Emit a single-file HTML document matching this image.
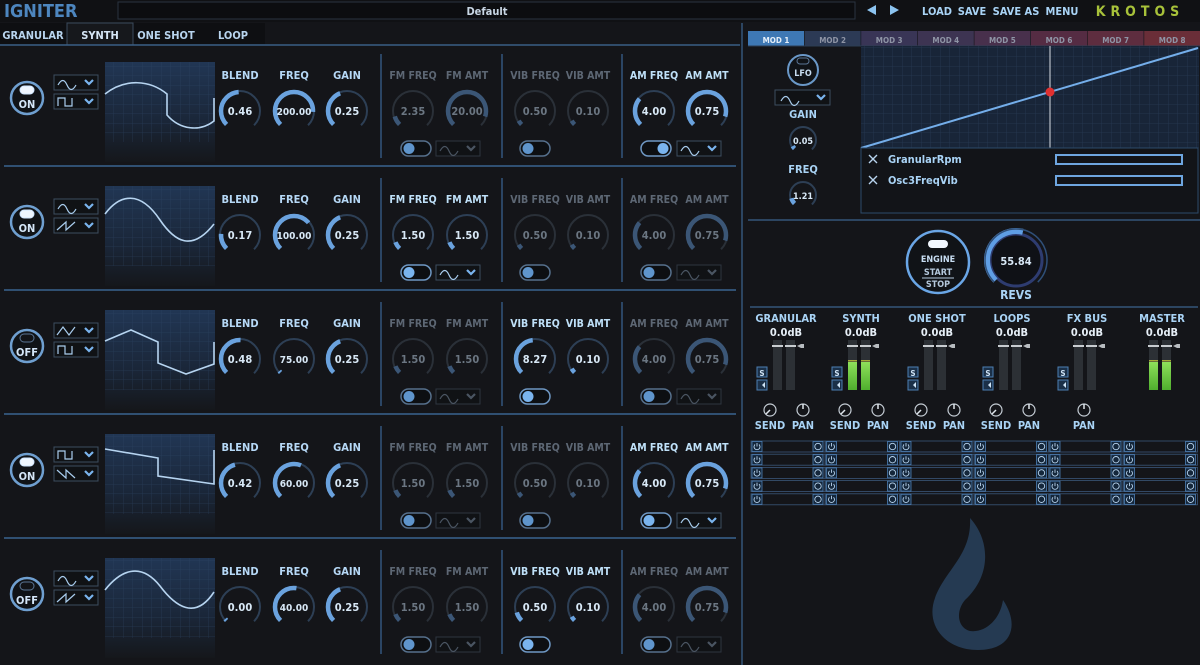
<!DOCTYPE html>
<html><head><meta charset="utf-8"><style>
html,body{margin:0;padding:0;background:#141519;width:1200px;height:665px;overflow:hidden}
svg{display:block}
text{font-family:"DejaVu Sans Condensed","Liberation Sans",sans-serif;font-weight:bold}
</style></head><body>
<svg id="s" width="1200" height="665" xmlns="http://www.w3.org/2000/svg">
<defs>
<pattern id="grid" width="9.5" height="9.5" patternUnits="userSpaceOnUse"><path d="M9.5 0V9.5H0" fill="none" stroke="#2f4766" stroke-width="0.8"/></pattern>
<linearGradient id="fade" x1="0" y1="0" x2="0" y2="1"><stop offset="0" stop-color="#213654"/><stop offset="0.6" stop-color="#1a2638"/><stop offset="1" stop-color="#15171b"/></linearGradient>
<linearGradient id="green" x1="0" y1="0" x2="0" y2="1"><stop offset="0" stop-color="#8ee05a"/><stop offset="1" stop-color="#4fae2e"/></linearGradient>
</defs>
</svg>
<script>
const S=document.getElementById('s');let h='';
const BL='#7fb4ea',DIM='#5d6774',LB='#a9d3f5';
function T(x,y,t,sz,c,anc){h+=`<text x="${x}" y="${y}" font-size="${sz}" fill="${c}" text-anchor="${anc||'middle'}">${t}</text>`}
h+=`<rect x="0" y="0" width="1200" height="22" fill="#101114"/>`;
T(4,17,'IGNITER',18,'#4d86bf','start');
h+=`<rect x="118" y="2" width="737" height="17" fill="#0c0d10" stroke="#2a3340"/>`;
T(487,15,'Default',11,'#c8d6e4');
h+=`<path d="M867 10l9-5v10z M890 5l9 5-9 5z" fill="#8cc4f0"/>`;
T(937,15,'LOAD',11,LB);T(972,15,'SAVE',11,LB);T(1016,15,'SAVE AS',11,LB);T(1062,15,'MENU',11,LB);
h+=`<text x="1140" y="16" font-size="14" fill="#a8c23a" text-anchor="middle" letter-spacing="5">KROTOS</text>`;
h+=`<rect x="0" y="23" width="265" height="21" fill="#0e0f12"/><rect x="67" y="23" width="66" height="22" fill="#16181c" stroke="#3a4a5c"/>`;
T(33,39,'GRANULAR',11,'#b8d4ee');T(100,39,'SYNTH',11,'#d6e6f6');T(166,39,'ONE SHOT',11,'#b8d4ee');T(233,39,'LOOP',11,'#b8d4ee');
h+=`<line x1="0" y1="45" x2="740" y2="45" stroke="#3a5f86" stroke-width="1.5"/>`;
h+=`<line x1="742" y1="23" x2="742" y2="665" stroke="#2c4561" stroke-width="2"/>`;
function knob(cx,cy,r,f,val,act,fs){
 const C=2*Math.PI*r;const tc=act?'#2d3f55':'#2a3038',vc=act?'#6aa2de':'#3b5676';
 h+=`<circle cx="${cx}" cy="${cy}" r="${r}" fill="none" stroke="${tc}" stroke-width="2" stroke-dasharray="${0.75*C} ${C}" transform="rotate(135 ${cx} ${cy})"/>`;
 if(f>0.005)h+=`<circle cx="${cx}" cy="${cy}" r="${r-1}" fill="none" stroke="${vc}" stroke-width="4.5" stroke-dasharray="${0.75*C*f} ${C*2}" transform="rotate(135 ${cx} ${cy})"/>`;
 else h+=`<circle cx="${cx}" cy="${cy}" r="${r-1}" fill="none" stroke="${vc}" stroke-width="4.5" stroke-dasharray="2 ${C*2}" transform="rotate(135 ${cx} ${cy})"/>`;
 T(cx,cy+4,val,fs||11,act?'#d8e8f6':'#6b7682');
}
function tog(x,y,act,right){h+=`<rect x="${x}" y="${y}" width="30" height="15" rx="7.5" fill="#0d0f12" stroke="${act?'#6f98c4':'#56708c'}" stroke-width="1.5"/><circle cx="${right?x+22:x+8}" cy="${y+7.5}" r="5.5" fill="${act?'#7ab4ee':'#5f95cc'}"/>`}
function dd(x,y,w,act,sh){const c=act?'#a9cdee':'#4a5562';h+=`<rect x="${x}" y="${y}" width="${w}" height="15" fill="#101215" stroke="${act?'#3d4d60':'#2e3540'}"/>`;
 const p=sh||'M'+(x+4)+' '+(y+10)+'q5-9 9 0t9 0';h+=`<path d="${p}" fill="none" stroke="${c}" stroke-width="1.2"/>`;
 h+=`<path d="M${x+w-13} ${y+5}l4 4 4-4" fill="none" stroke="${act?'#7ab4ee':'#4a5562'}" stroke-width="2.2"/>`}
const rows=[
 {on:1,sh1:'sine',sh2:'sq',f:[.46,.8,.4, .1,.85, .05,.05, .3,.85],v:['0.46','200.00','0.25','2.35','20.00','0.50','0.10','4.00','0.75'],a:2,wave:'M105 94 C125 78 150 80 167 94 L167 115 C180 130 200 132 214 121 L214 98'},
 {on:1,sh1:'sine',sh2:'saw',f:[.17,.65,.4, .08,.08, .05,.05, .3,.85],v:['0.17','100.00','0.25','1.50','1.50','0.50','0.10','4.00','0.75'],a:0,wave:'M105 90 C120 70 140 66 160 96 C175 118 192 128 214 100'},
 {on:0,sh1:'tri',sh2:'sq',f:[.48,.02,.4, .08,.08, .45,.05, .3,.85],v:['0.48','75.00','0.25','1.50','1.50','8.27','0.10','4.00','0.75'],a:1,wave:'M105 93 L131 82 L158 94 L158 115 L186 126 L214 116 L214 94'},
 {on:1,sh1:'sq',sh2:'sawd',f:[.42,.55,.4, .08,.08, .05,.05, .3,.85],v:['0.42','60.00','0.25','1.50','1.50','0.50','0.10','4.00','0.75'],a:2,wave:'M105 77 L158 86 L158 104 L214 112 L214 78'},
 {on:0,sh1:'sine',sh2:'saw',f:[0,.5,.4, .08,.08, .1,.05, .3,.85],v:['0.00','40.00','0.25','1.50','1.50','0.50','0.10','4.00','0.75'],a:1,wave:'M105 94 C120 75 140 65 160 90 C175 110 195 125 214 96'}];
const kx=[240,294,347,413,467,535,588,654,707];
const lbl=['BLEND','FREQ','GAIN','FM FREQ','FM AMT','VIB FREQ','VIB AMT','AM FREQ','AM AMT'];
function shapePath(k,x,y){
 if(k=='sine')return `M${x+4} ${y+10}q5-9 9 0t9 0`;
 if(k=='sq')return `M${x+4} ${y+12}v-8h7v8h7v-8`;
 if(k=='tri')return `M${x+3} ${y+12}l6-8 6 8 6-8`;
 if(k=='saw')return `M${x+3} ${y+12}l9-8v8l9-8`;
 if(k=='sawd')return `M${x+3} ${y+4}l9 8v-8l9 8`;}
rows.forEach((r,i)=>{const t=42+124*i;
 if(i<4)h+=`<line x1="4" y1="${t+124}" x2="736" y2="${t+124}" stroke="#3a6590" stroke-width="1.5"/>`;
 h+=`<circle cx="27" cy="${t+56}" r="16" fill="#101317" stroke="#6f9fd0" stroke-width="2.5"/>`;
 h+=`<rect x="20" y="${t+44}" width="14" height="8" rx="4" fill="${r.on?'#eef6ff':'#121418'}" stroke="${r.on?'#cfe6ff':'#5a7594'}"/>`;
 T(27,t+66,r.on?'ON':'OFF',11,'#d4e6f8');
 dd(54,t+33,44,1,shapePath(r.sh1,54,t+33));dd(54,t+52,44,1,shapePath(r.sh2,54,t+52));
 h+=`<rect x="105" y="${t+20}" width="110" height="100" fill="url(#fade)"/><rect x="105" y="${t+20}" width="110" height="80" fill="url(#grid)" opacity="0.6"/>`;
 h+=`<path d="${r.wave}" transform="translate(0 ${t-42})" fill="none" stroke="#b6d4f0" stroke-width="1.6"/>`;
 [381,502,622].forEach(x=>h+=`<line x1="${x}" y1="${t+12}" x2="${x}" y2="${t+116}" stroke="#2b4564" stroke-width="2"/>`);
 kx.forEach((x,j)=>{const grp=j<3?-1:Math.floor((j-3)/2);const act=grp==-1||grp==r.a;
  T(x,t+37,lbl[j],j<3?11:10.5,act?(grp==-1?'#b6d8f6':'#bfe0f8'):DIM);
  knob(x,t+69,20,r.f[j],r.v[j],act,j==1?10:11);});
 tog(401,t+99,r.a==0,false);dd(436,t+99,44,r.a==0);
 tog(520,t+99,r.a==1,false);
 tog(641,t+99,r.a==2,r.a==2&&i==0);dd(677,t+99,44,r.a==2);
});
const tc=['#3e78b4','#2c3a55','#393556','#3d3452','#48304c','#552c43','#5e2d3f','#6a2e38'];
for(let k=0;k<8;k++){const x=748+k*56.6;h+=`<rect x="${x}" y="31" width="56" height="15" fill="${tc[k]}"/>`;T(x+28,43,'MOD '+(k+1),8,k?'#8f95a6':'#e6f0fa');}
h+=`<line x1="748" y1="46" x2="1200" y2="46" stroke="#2c3d52"/>`;
h+=`<rect x="861" y="46" width="338" height="102" fill="#182538"/><rect x="861" y="46" width="338" height="102" fill="url(#grid)" opacity="0.6"/>`;
h+=`<line x1="861" y1="148" x2="1198" y2="48" stroke="#74aeea" stroke-width="2"/><line x1="1050" y1="46" x2="1050" y2="148" stroke="#d8dde4" stroke-width="1"/><circle cx="1050" cy="92" r="4.5" fill="#e03030"/>`;
h+=`<rect x="861" y="148" width="337" height="65" fill="#121418" stroke="#2c4a6a"/>`;
h+=`<path d="M869 155l8 8M877 155l-8 8M869 176l8 8M877 176l-8 8" stroke="#b8d4ee" stroke-width="1.4"/>`;
T(888,163,'GranularRpm',11,LB,'start');T(888,184,'Osc3FreqVib',11,LB,'start');
h+=`<rect x="1056" y="155" width="126" height="9" fill="none" stroke="#6ea6e0" stroke-width="2"/><rect x="1056" y="176" width="126" height="9" fill="none" stroke="#6ea6e0" stroke-width="2"/>`;
h+=`<circle cx="803" cy="70" r="15" fill="#101317" stroke="#6a98c8" stroke-width="2"/><rect x="797" y="58" width="12" height="6" rx="3" fill="none" stroke="#5a7594"/>`;T(803,76,'LFO',9,'#c7dcef');
dd(775,90,55,1,'M781 101q5-9 9 0t9 0');
T(803,118,'GAIN',11,LB);knob(803,140,13,0.05,'0.05',1,9);
T(803,173,'FREQ',11,LB);knob(803,195,13,0.1,'1.21',1,9);
h+=`<line x1="748" y1="220" x2="1200" y2="220" stroke="#2c4561" stroke-width="2"/>`;
h+=`<circle cx="938" cy="262" r="31" fill="#101317" stroke="#6aa6e6" stroke-width="2.5"/><rect x="928" y="240" width="20" height="8" rx="4" fill="#f2f8ff"/>`;
T(938,262,'ENGINE',9,'#c8def3');T(938,275,'START',9,'#b4c8dc');h+=`<line x1="922" y1="278" x2="954" y2="278" stroke="#b4c8dc"/>`;T(938,287,'STOP',9,'#b4c8dc');
h+=`<circle cx="1016" cy="260" r="26" fill="#0f1116" stroke="#2e3c70" stroke-width="3"/><circle cx="1016" cy="260" r="29" fill="none" stroke="#5f9ee4" stroke-width="6" stroke-dasharray="${0.75*2*Math.PI*29*0.55} 999" transform="rotate(135 1016 260)"/><circle cx="1016" cy="260" r="31" fill="none" stroke="#2f4f78" stroke-width="1.5" stroke-dasharray="${0.75*2*Math.PI*31} 999" transform="rotate(135 1016 260)"/>`;
T(1016,265,'55.84',11,'#d8e8f6');T(1016,299,'REVS',12,LB);
h+=`<line x1="750" y1="307" x2="1198" y2="307" stroke="#2c4561" stroke-width="2"/>`;
const mx=[786,861,937,1012,1087,1162],mn=['GRANULAR','SYNTH','ONE SHOT','LOOPS','FX BUS','MASTER'];
mx.forEach((x,k)=>{T(x,322,mn[k],11,LB);T(x,336,'0.0dB',11,'#e6eef6');
 const g=(k==1||k==5);[x-13,x].forEach(mx2=>{h+=`<rect x="${mx2}" y="340" width="9" height="50" fill="#2c3035"/><rect x="${mx2-1}" y="345" width="11" height="2" fill="#c8ccd0"/>`;
  if(g)h+=`<rect x="${mx2}" y="362" width="9" height="28" fill="url(#green)"/><rect x="${mx2}" y="360" width="9" height="1.5" fill="#a6a838"/>`;});
 h+=`<path d="M${x+11} 346l4-2h3v4h-3z" fill="#b8bcc0"/>`;
 if(k<5){h+=`<rect x="${x-29}" y="367" width="10" height="10" fill="#1b3048" stroke="#4d7fb4"/><rect x="${x-29}" y="380" width="10" height="10" fill="#1b3048" stroke="#4d7fb4"/>`;T(x-24,376,'S',8,'#d0e4f6');h+=`<path d="M${x-26} 385h2l3-3v6l-3-3" fill="#d0e4f6"/>`;}
 const kn=(cx)=>{h+=`<circle cx="${cx}" cy="410" r="6" fill="none" stroke="#c4ccd4" stroke-width="1.2"/>`};
 if(k<4){kn(x-16);h+=`<line x1="${x-20}" y1="414" x2="${x-16}" y2="410" stroke="#e0e6ec" stroke-width="1.5"/>`;T(x-16,429,'SEND',11,LB);}
 if(k<5){const px=k==4?x-3:x+17;kn(px);h+=`<line x1="${px}" y1="404" x2="${px}" y2="409" stroke="#e0e6ec" stroke-width="1.5"/>`;T(px,429,'PAN',11,LB);}
});
for(let rr=0;rr<5;rr++){const y=441+rr*13.2;for(let c=0;c<6;c++){const x=751+c*74.5;
 h+=`<rect x="${x}" y="${y}" width="74" height="11" fill="none" stroke="#3a5678" stroke-width="0.8"/>`;
 h+=`<rect x="${x+1}" y="${y+0.5}" width="10" height="10" fill="#14263a" stroke="#4d7fb4" stroke-width="0.8"/><rect x="${x+62}" y="${y+0.5}" width="10" height="10" fill="#14263a" stroke="#4d7fb4" stroke-width="0.8"/>`;
 h+=`<path d="M${x+4} ${y+3.5}a3 3 0 1 0 4 0M${x+6} ${y+2}v3.5" fill="none" stroke="#b8d4ee" stroke-width="0.9"/><circle cx="${x+67}" cy="${y+5.5}" r="3.2" fill="none" stroke="#b8d4ee" stroke-width="0.9"/>`;}}
h+=`<path d="M970 518 C990 540 992 575 965 600 C955 612 958 628 970 631 C985 633 1000 620 1003 600 C1020 625 1012 650 978 650 C945 650 925 625 935 598 C945 570 972 555 970 518 Z" fill="#253a52"/>`;
S.insertAdjacentHTML('beforeend',h);
</script>
</body></html>
